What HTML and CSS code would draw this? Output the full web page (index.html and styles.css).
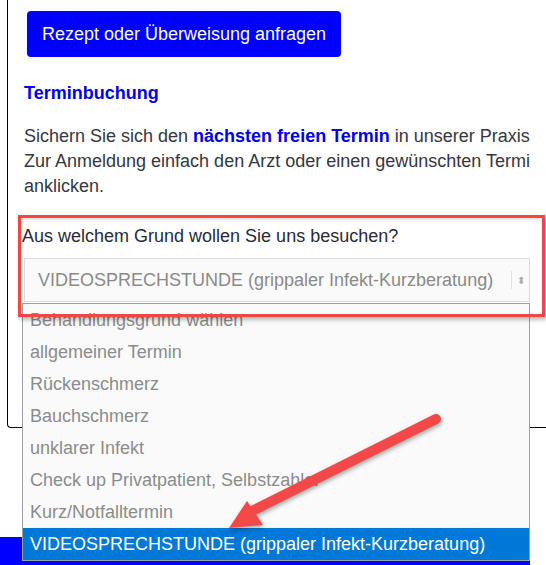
FILE: index.html
```html
<!DOCTYPE html>
<html>
<head>
<meta charset="utf-8">
<link rel="stylesheet" href="styles.css">
</head>
<body>
<div class="page">
  <div class="panel">
    <button class="btn-request">Rezept oder Überweisung anfragen</button>
    <h3 class="title">Terminbuchung</h3>
    <p class="intro">Sichern Sie sich den <b>nächsten freien Termin</b> in unserer Praxis.<br>Zur Anmeldung einfach den Arzt oder einen gewünschten Termin<br>anklicken.</p>
    <div class="question">Aus welchem Grund wollen Sie uns besuchen?</div>
    <div class="fake-select">
      <span class="fake-value">VIDEOSPRECHSTUNDE (grippaler Infekt-Kurzberatung)</span>
      <span class="fake-sep"></span>
      <span class="fake-arrow">&#x2b0d;</span>
    </div>
  </div>
  <div class="footer-bar"></div>

  <ul class="dropdown">
    <li>Behandlungsgrund wählen</li>
    <li>allgemeiner Termin</li>
    <li>Rückenschmerz</li>
    <li>Bauchschmerz</li>
    <li>unklarer Infekt</li>
    <li>Check up Privatpatient, Selbstzahler</li>
    <li>Kurz/Notfalltermin</li>
    <li class="selected">VIDEOSPRECHSTUNDE (grippaler Infekt-Kurzberatung)</li>
  </ul>

  <!-- annotation -->
  <div class="mark"></div>
  <svg class="arrow" width="546" height="565" viewBox="0 0 546 565">
    <line x1="436" y1="419" x2="252" y2="511" stroke="#f24848" stroke-width="10" stroke-linecap="round"/>
    <polygon points="229,528 247,501 263,525" fill="#f24848"/>
  </svg>
</div>
</body>
</html>
```

FILE: styles.css
```css
body {
  margin: 0;
  background: #fff;
  font-family: "Liberation Sans", Arial, sans-serif;
}

.page {
  position: relative;
  width: 546px;
  height: 565px;
  overflow: hidden;
}

.panel {
  margin-left: 7px;
  height: 416px;
  padding: 11px 0 0 16px;
  border-left: 1px solid #000;
  border-bottom: 1px solid #000;
  border-bottom-left-radius: 4px;
}

.btn-request {
  display: block;
  margin-left: 3px;
  width: 314px;
  height: 46px;
  background: #0000ff;
  color: #fff;
  border: none;
  border-radius: 4px;
  font-family: inherit;
  font-size: 18px;
  padding: 0;
}

.title {
  margin: 26px 0 0;
  font-size: 18px;
  line-height: 20px;
  color: #0000ee;
}

.intro {
  margin: 21px 0 0;
  width: 506px;
  font-size: 18px;
  line-height: 25px;
  color: #363640;
  white-space: nowrap;
  overflow: hidden;
}
.intro b {
  color: #0000ee;
}

.question {
  margin: 27px 0 0 -2px;
  font-size: 18px;
  line-height: 20px;
  color: #2a2a38;
}

.fake-select {
  display: flex;
  align-items: center;
  margin-top: 12px;
  width: 506px;
  height: 44px;
  box-sizing: border-box;
  border: 1px solid #ddd;
  background: #fafafa;
  color: #8a8a8a;
  font-size: 18px;
}
.fake-value {
  flex: 1;
  padding-left: 13px;
  white-space: nowrap;
}
.fake-sep {
  width: 1px;
  height: 18px;
  background: #e2e2e2;
}
.fake-arrow {
  width: 17px;
  text-align: center;
  font-size: 10px;
  color: #aaa;
}

.footer-bar {
  margin-top: 109px;
  width: 530px;
  height: 28px;
  background: #0000ff;
}

.dropdown {
  position: absolute;
  left: 22px;
  top: 303px;
  width: 508px;
  margin: 0;
  padding: 0;
  list-style: none;
  box-sizing: border-box;
  border: 1px solid #a0a0a0;
  background: #fafafa;
}
.dropdown li {
  height: 32px;
  line-height: 32px;
  padding-left: 7px;
  font-size: 18px;
  color: #8c8c8c;
  white-space: nowrap;
}
.dropdown li.selected {
  background: #0078d7;
  color: #fff;
}

.mark {
  position: absolute;
  left: 18px;
  top: 215px;
  width: 527px;
  height: 102px;
  box-sizing: border-box;
  border: 3px solid #f24545;
  box-shadow: 2px 3px 4px rgba(0, 0, 0, 0.25), inset 1px 2px 3px rgba(0, 0, 0, 0.12);
}

.arrow {
  position: absolute;
  left: 0;
  top: 0;
  pointer-events: none;
  filter: drop-shadow(1px 2px 2px rgba(0, 0, 0, 0.35));
}
```
